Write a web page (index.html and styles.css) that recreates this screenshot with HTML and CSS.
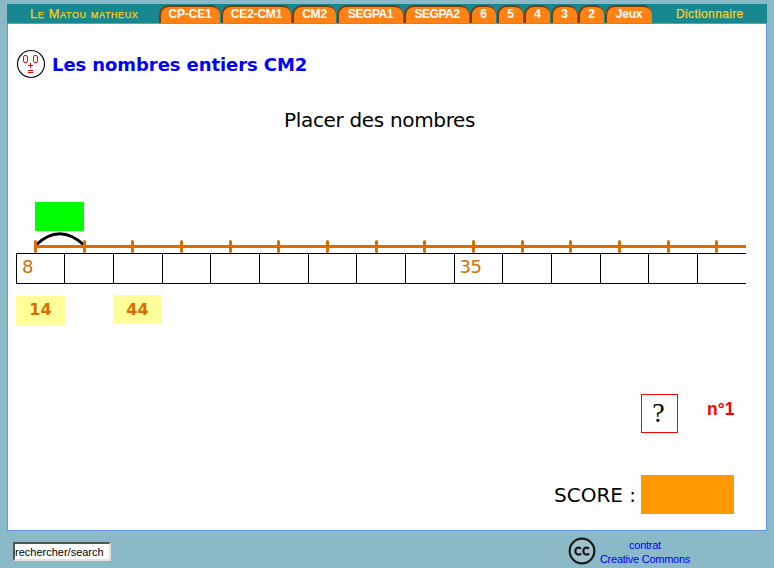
FILE: index.html
```html
<!DOCTYPE html>
<html lang="fr">
<head>
<meta charset="utf-8">
<title>Les nombres entiers CM2</title>
<link rel="stylesheet" href="styles.css">
</head>
<body>
<header class="bar">
  <a class="brand">Le Matou matheux</a>
  <nav class="tabs">
    <a class="tab w61">CP-CE1</a><a class="tab w70">CE2-CM1</a><a class="tab w44">CM2</a><a class="tab w66">SEGPA1</a><a class="tab w65">SEGPA2</a><a class="tab">6</a><a class="tab">5</a><a class="tab">4</a><a class="tab">3</a><a class="tab">2</a><a class="tab w47">Jeux</a>
  </nav>
  <a class="dict">Dictionnaire</a>
</header>
<main class="panel">
  <div class="heading">
    <svg class="face" width="30" height="30" viewBox="0 0 30 30">
      <circle cx="15" cy="15" r="13.5" fill="#fff" stroke="#111" stroke-width="1.2"/>
      <g fill="none" stroke="#f00">
        <rect x="7.5" y="6.500" width="4" height="7" rx="1.500"/>
        <rect x="17.500" y="6.500" width="4" height="7" rx="1.500"/>
        <path d="M12 16.500h5M14.500 14v5M12 21.500h5M12 23.500h5"/>
      </g>
    </svg>
    <h1>Les nombres entiers CM2</h1>
  </div>
  <h2><span>Placer des nombres</span></h2>
  <div class="target"></div>
  <svg class="axis" width="730" height="22" viewBox="0 0 730 22">
    <path d="M20 14Q43.500 -8.500 68 14" fill="none" stroke="#000" stroke-width="2.700"/>
    <path d="M19 15.500H730" stroke="#d96d00" stroke-width="3"/>
    <path d="M19.500 10.500v10M68.500 10.500v10M116.500 10.500v10M165.500 10.500v10M214.500 10.500v10M262.500 10.500v10M311.500 10.500v10M360.500 10.500v10M408.500 10.500v10M457.500 10.500v10M506.500 10.500v10M554.500 10.500v10M603.500 10.500v10M652.500 10.500v10M700.500 10.500v10" stroke="#d96d00" stroke-width="3" stroke-linecap="round"/>
  </svg>
  <div class="cells"><span>8</span><span></span><span></span><span></span><span></span><span></span><span></span><span></span><span></span><span>35</span><span></span><span></span><span></span><span></span><span></span></div>
  <div class="labels"><b>14</b><b>44</b></div>
  <div class="question"><span class="help">?</span><span class="num">n°1</span></div>
  <div class="score"><span>SCORE :</span><i></i></div>
</main>
<footer>
  <input class="search" value="rechercher/search" aria-label="rechercher">
  <svg class="cc" width="28" height="28" viewBox="0 0 28 28">
    <circle cx="14" cy="14" r="12.300" fill="#9fc3cc" stroke="#1a1a1a" stroke-width="2.200"/>
    <path d="M13 11.600Q9.500 9.200 7.700 12.200Q6.700 14.500 8.200 16.500Q10 18.500 13.200 16.700M21 11.600Q17.500 9.200 15.700 12.200Q14.700 14.500 16.200 16.500Q18 18.500 21.200 16.700" fill="none" stroke="#1a1a1a" stroke-width="2.200"/>
  </svg>
  <a class="licence">contrat<br>Creative Commons</a>
</footer>
</body>
</html>
```
FILE: styles.css
```css
* { box-sizing: border-box; }
body {
  margin: 0;
  padding: 4px 7px 0;
  width: 774px;
  height: 568px;
  overflow: hidden;
  background: #8abac8;
  font-family: "Liberation Sans", Arial, sans-serif;
}
.bar {
  display: flex;
  width: 760px;
  height: 19px;
  background: #178890;
  color: #fc1;
  font-size: 12px;
  line-height: 20px;
}
.brand {
  width: 152px;
  padding-left: 23px;
  font-variant: small-caps;
  font-size: 13px;
  letter-spacing: .6px;
  -webkit-text-stroke: .25px #fc1;
  white-space: nowrap;
}
.tabs { display: flex; gap: 1px; padding-top: 1px; }
.tab {
  width: 26px;
  height: 18px;
  border-left: 2px solid #783c08;
  border-top: 2px solid #783c08;
  border-radius: 10px 9px 0 0;
  background: #ff8214;
  color: #fff;
  font-weight: bold;
  letter-spacing: -.2px;
  line-height: 14px;
  text-align: center;
  text-indent: -1px;
  white-space: nowrap;
}
.w61 { width: 61px; }
.w70 { width: 70px; }
.w44 { width: 44px; }
.w66 { width: 66px; letter-spacing: -.5px; }
.w65 { width: 65px; letter-spacing: -.5px; }
.w47 { width: 47px; }
.dict { margin-left: 24px; letter-spacing: .35px; -webkit-text-stroke: .25px #fc1; }
.panel {
  width: 760px;
  height: 508px;
  border: 1px solid #6495ed;
  background: #fff;
  font-family: "DejaVu Sans", Verdana, sans-serif;
}
.heading { display: flex; height: 54px; margin: 25px 0 0 8px; }
h1 {
  margin: 4px 0 0 6px;
  color: #00f;
  font-size: 18px;
  letter-spacing: -.08px;
  line-height: 24px;
  white-space: nowrap;
}
h2 {
  height: 99px;
  margin: 0 0 0 276px;
  padding-top: 5px;
  font-size: 20px;
  font-weight: normal;
  letter-spacing: -.33px;
  line-height: 24px;
}
.target { width: 49px; height: 29px; margin-left: 27px; background: #0f0; }
.axis { display: block; margin-left: 8px; }
.cells {
  display: grid;
  grid-template-columns: 48.3px repeat(13, 48.667px) 1fr;
  width: 730px;
  height: 31px;
  margin-left: 8px;
  border: solid #000;
  border-width: 1px 0;
}
.cells span {
  padding-left: 5px;
  border-left: 1px solid #000;
  color: #d96d00;
  font-size: 18px;
  letter-spacing: -.4px;
  line-height: 26px;
}
.labels { display: flex; gap: 48px; height: 30px; margin: 11px 0 0 8px; }
.labels b {
  width: 49px;
  height: 29px;
  background: #ff9;
  color: #d96d00;
  font-size: 16px;
  line-height: 29px;
  text-align: center;
}
.labels b:first-child { margin-top: 1px; line-height: 27px; }
.question { display: flex; height: 81px; margin: 69px 0 0 633px; }
.help {
  width: 37px;
  height: 39px;
  padding-right: 2px;
  border: 1px solid #f00;
  font: 28px/35px "Liberation Serif", serif;
  text-align: center;
}
.num {
  margin-left: 29px;
  color: #f00;
  font: bold 17.5px/30px "Liberation Sans", sans-serif;
}
.score { display: flex; margin-left: 546px; font-size: 20px; line-height: 41px; }
.score span { width: 87px; white-space: nowrap; }
.score i { width: 93px; height: 39px; background: #f90; }
footer { display: flex; padding-left: 6px; }
.search {
  width: 98px;
  height: 19px;
  margin-top: 11px;
  padding: 0;
  border: 2px solid;
  border-color: #555 #e4e2dc #e4e2dc #555;
  border-radius: 0;
  background: #fff;
  font: 11px "Liberation Sans", sans-serif;
}
.cc { margin: 6px 0 0 457px; }
.licence {
  width: 92px;
  margin: 7px 0 0 3px;
  color: #00f;
  font-size: 11px;
  letter-spacing: -.25px;
  line-height: 14px;
  text-align: center;
  white-space: nowrap;
}
```
